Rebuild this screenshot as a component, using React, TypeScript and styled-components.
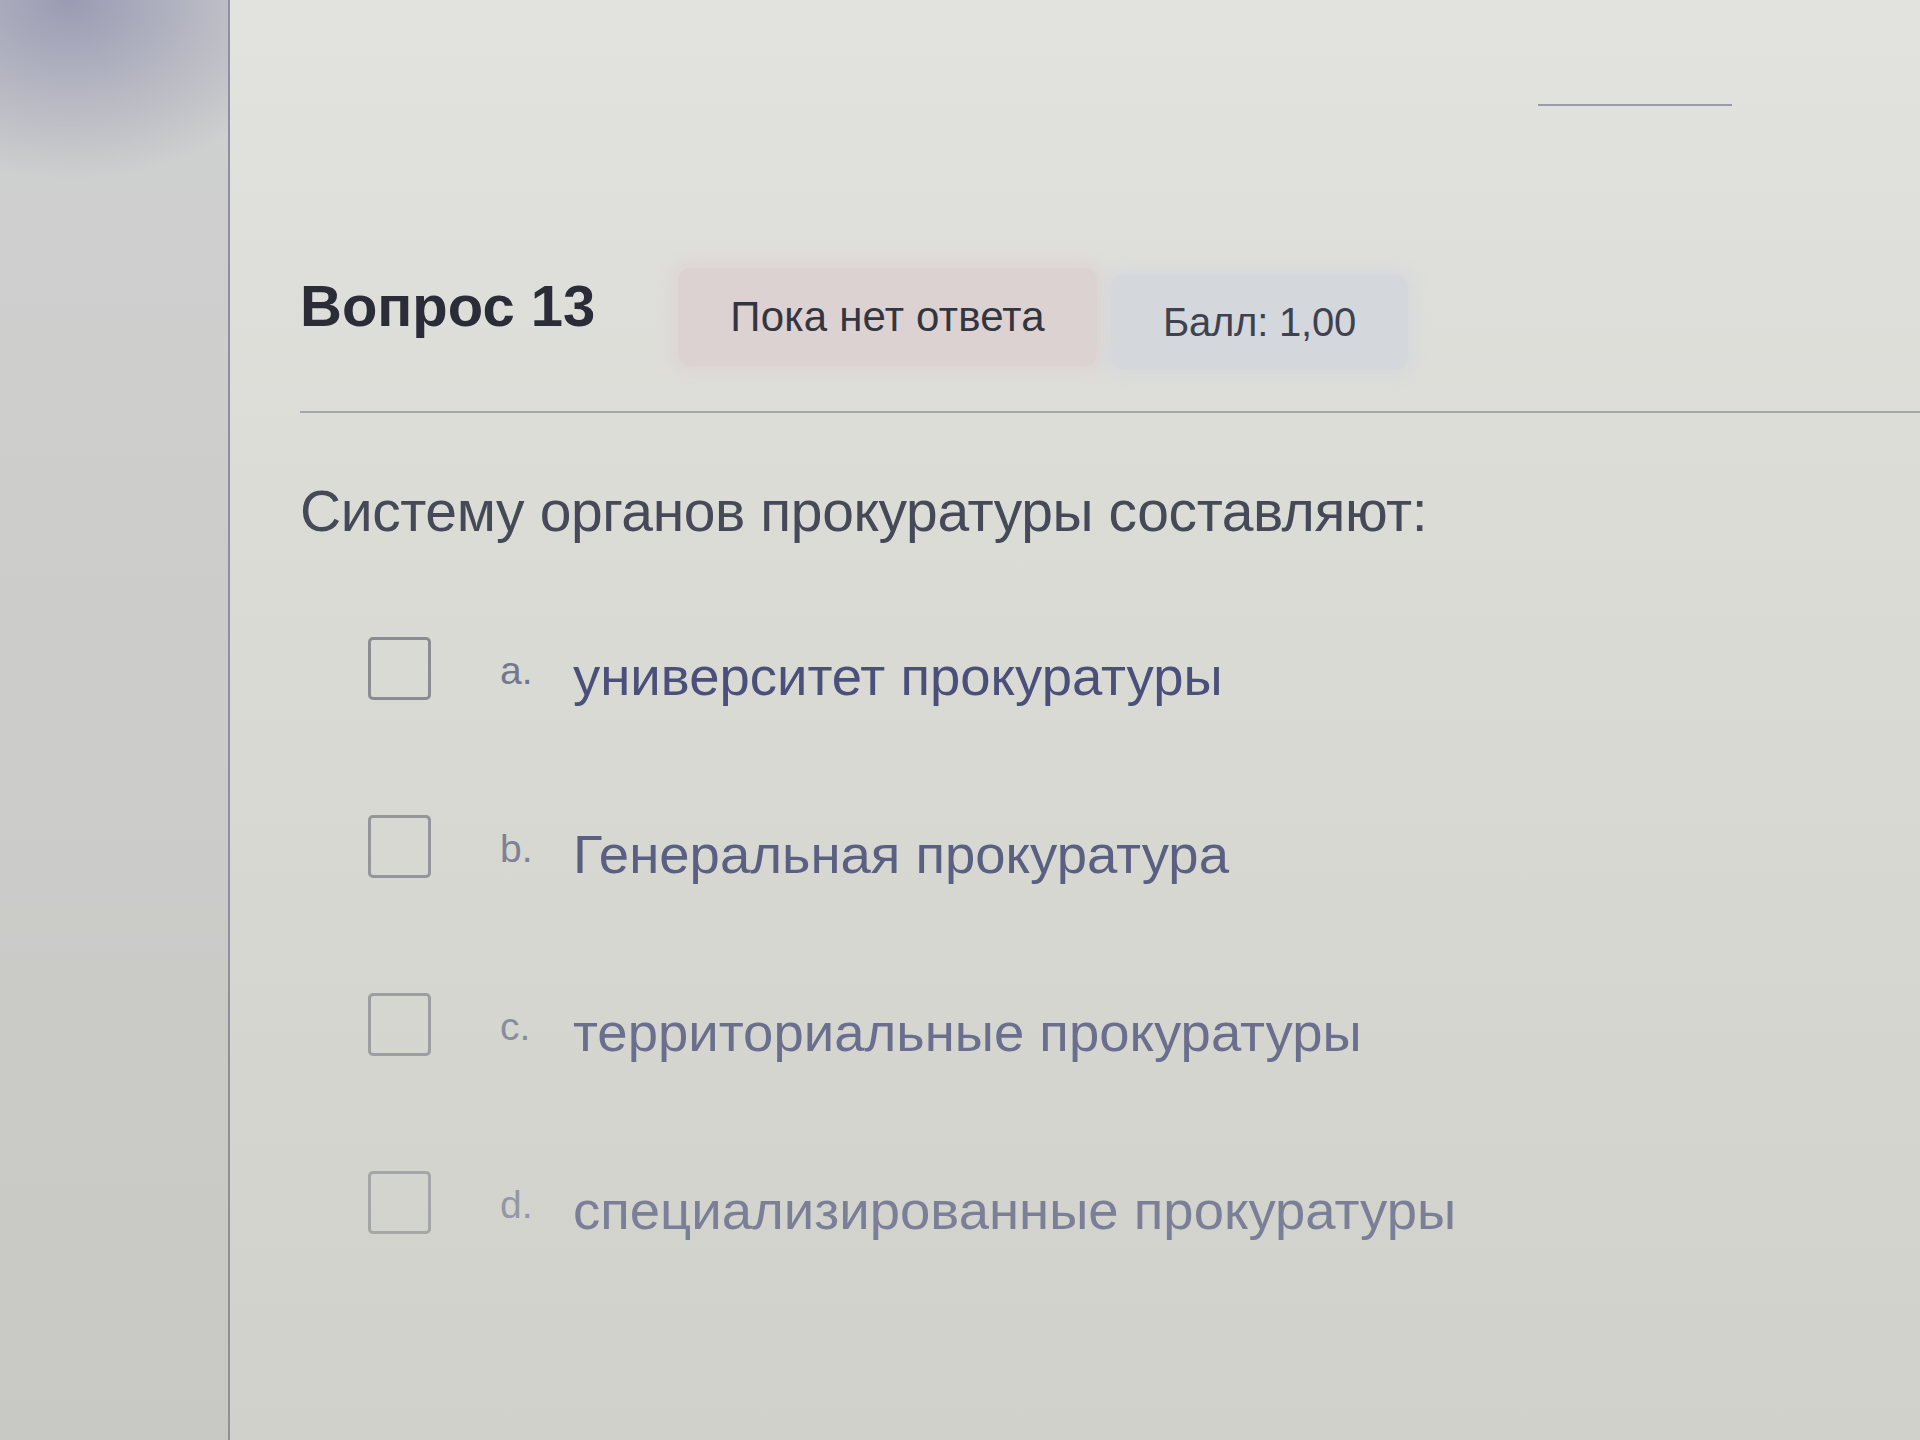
import React from "react";
import styled, { createGlobalStyle } from "styled-components";

const GlobalStyle = createGlobalStyle`
  html, body {
    margin: 0;
    padding: 0;
    background: #d9d9d4;
  }
  * { box-sizing: border-box; }
  body {
    font-family: "Liberation Sans", Arial, "Noto Sans", sans-serif;
  }
`;

const Page = styled.div`
  display: grid;
  grid-template-columns: 230px 1fr;
  width: 1920px;
  height: 1440px;
  overflow: hidden;
  background: linear-gradient(180deg, #e2e2de 0%, #dcdcd7 35%, #d5d6d0 70%, #d0d1cb 100%);
`;

const Sidebar = styled.aside`
  border-right: 2px solid #8e90a2;
  background:
    radial-gradient(ellipse 240px 180px at 70px 0px, rgba(118, 120, 160, 0.6), rgba(118, 120, 160, 0) 100%),
    linear-gradient(180deg, #cfd0d0 0%, #cccdca 50%, #c8c9c4 100%);
`;

const Main = styled.main`
  display: flex;
  flex-direction: column;
  padding-left: 70px;
`;

const TopBar = styled.div`
  display: flex;
  justify-content: flex-end;
  padding: 104px 188px 0 0;
  height: 267px;
`;

const ShortRule = styled.div`
  width: 194px;
  height: 2px;
  background: #9a9baa;
`;

const Header = styled.div`
  display: flex;
  align-items: center;
  height: 100px;
`;

const Title = styled.h3`
  margin: 0 83px 0 0;
  font-size: 58px;
  font-weight: 700;
  color: #2a2c38;
  line-height: 1;
  padding-bottom: 22px;
`;

const Badge = styled.div<{ $tone: "pink" | "blue" }>`
  display: flex;
  align-items: center;
  height: ${(p) => (p.$tone === "pink" ? "98px" : "94px")};
  margin-top: ${(p) => (p.$tone === "pink" ? "0" : "10px")};
  padding: 0 52px;
  margin-right: 14px;
  border-radius: 12px;
  background: ${(p) => (p.$tone === "pink" ? "#ddd2d2" : "#d4d7dc")};
  box-shadow: 0 0 14px 6px ${(p) => (p.$tone === "pink" ? "rgba(221,210,210,0.8)" : "rgba(212,215,220,0.8)")};
  font-size: ${(p) => (p.$tone === "pink" ? "42px" : "40px")};
  letter-spacing: ${(p) => (p.$tone === "pink" ? "0.2px" : "-0.2px")};
  color: ${(p) => (p.$tone === "pink" ? "#33353f" : "#3e4150")};
  line-height: 1;
`;

const Divider = styled.hr`
  margin: 44px 0 0 0;
  border: none;
  height: 2px;
  background: #a4a6b0;
`;

const QuestionText = styled.p`
  margin: 64px 0 0 0;
  font-size: 57px;
  letter-spacing: -0.4px;
  color: #454958;
  line-height: 1.2;
`;

const Answers = styled.div`
  display: flex;
  flex-direction: column;
  gap: 115px;
  margin-top: 92px;
  padding-left: 68px;
`;

const Row = styled.label<{ $fade: number }>`
  display: flex;
  align-items: center;
  height: 63px;
  opacity: ${(p) => 1 - p.$fade * 0.12};
`;

const Box = styled.span`
  flex: none;
  width: 63px;
  height: 63px;
  border: 3px solid #8b8d94;
  border-radius: 5px;
  background: transparent;
  margin-right: 69px;
`;

const Letter = styled.span`
  flex: none;
  width: 73px;
  font-size: 39px;
  color: #72768f;
  line-height: 1;
  margin-top: 4px;
`;

const AnswerText = styled.span`
  font-size: 54.5px;
  color: #4a5079;
  line-height: 1;
  margin-top: 16px;
`;

const answers = [
  { letter: "a.", text: "университет прокуратуры" },
  { letter: "b.", text: "Генеральная прокуратура" },
  { letter: "c.", text: "территориальные прокуратуры" },
  { letter: "d.", text: "специализированные прокуратуры" },
];

export default function App() {
  return (
    <>
      <GlobalStyle />
      <Page>
        <Sidebar />
        <Main>
          <TopBar>
            <ShortRule />
          </TopBar>
          <Header>
            <Title>Вопрос 13</Title>
            <Badge $tone="pink">Пока нет ответа</Badge>
            <Badge $tone="blue">Балл: 1,00</Badge>
          </Header>
          <Divider />
          <QuestionText>Систему органов прокуратуры составляют:</QuestionText>
          <Answers>
            {answers.map((a, i) => (
              <Row key={a.letter} $fade={i}>
                <Box />
                <Letter>{a.letter}</Letter>
                <AnswerText>{a.text}</AnswerText>
              </Row>
            ))}
          </Answers>
        </Main>
      </Page>
    </>
  );
}
